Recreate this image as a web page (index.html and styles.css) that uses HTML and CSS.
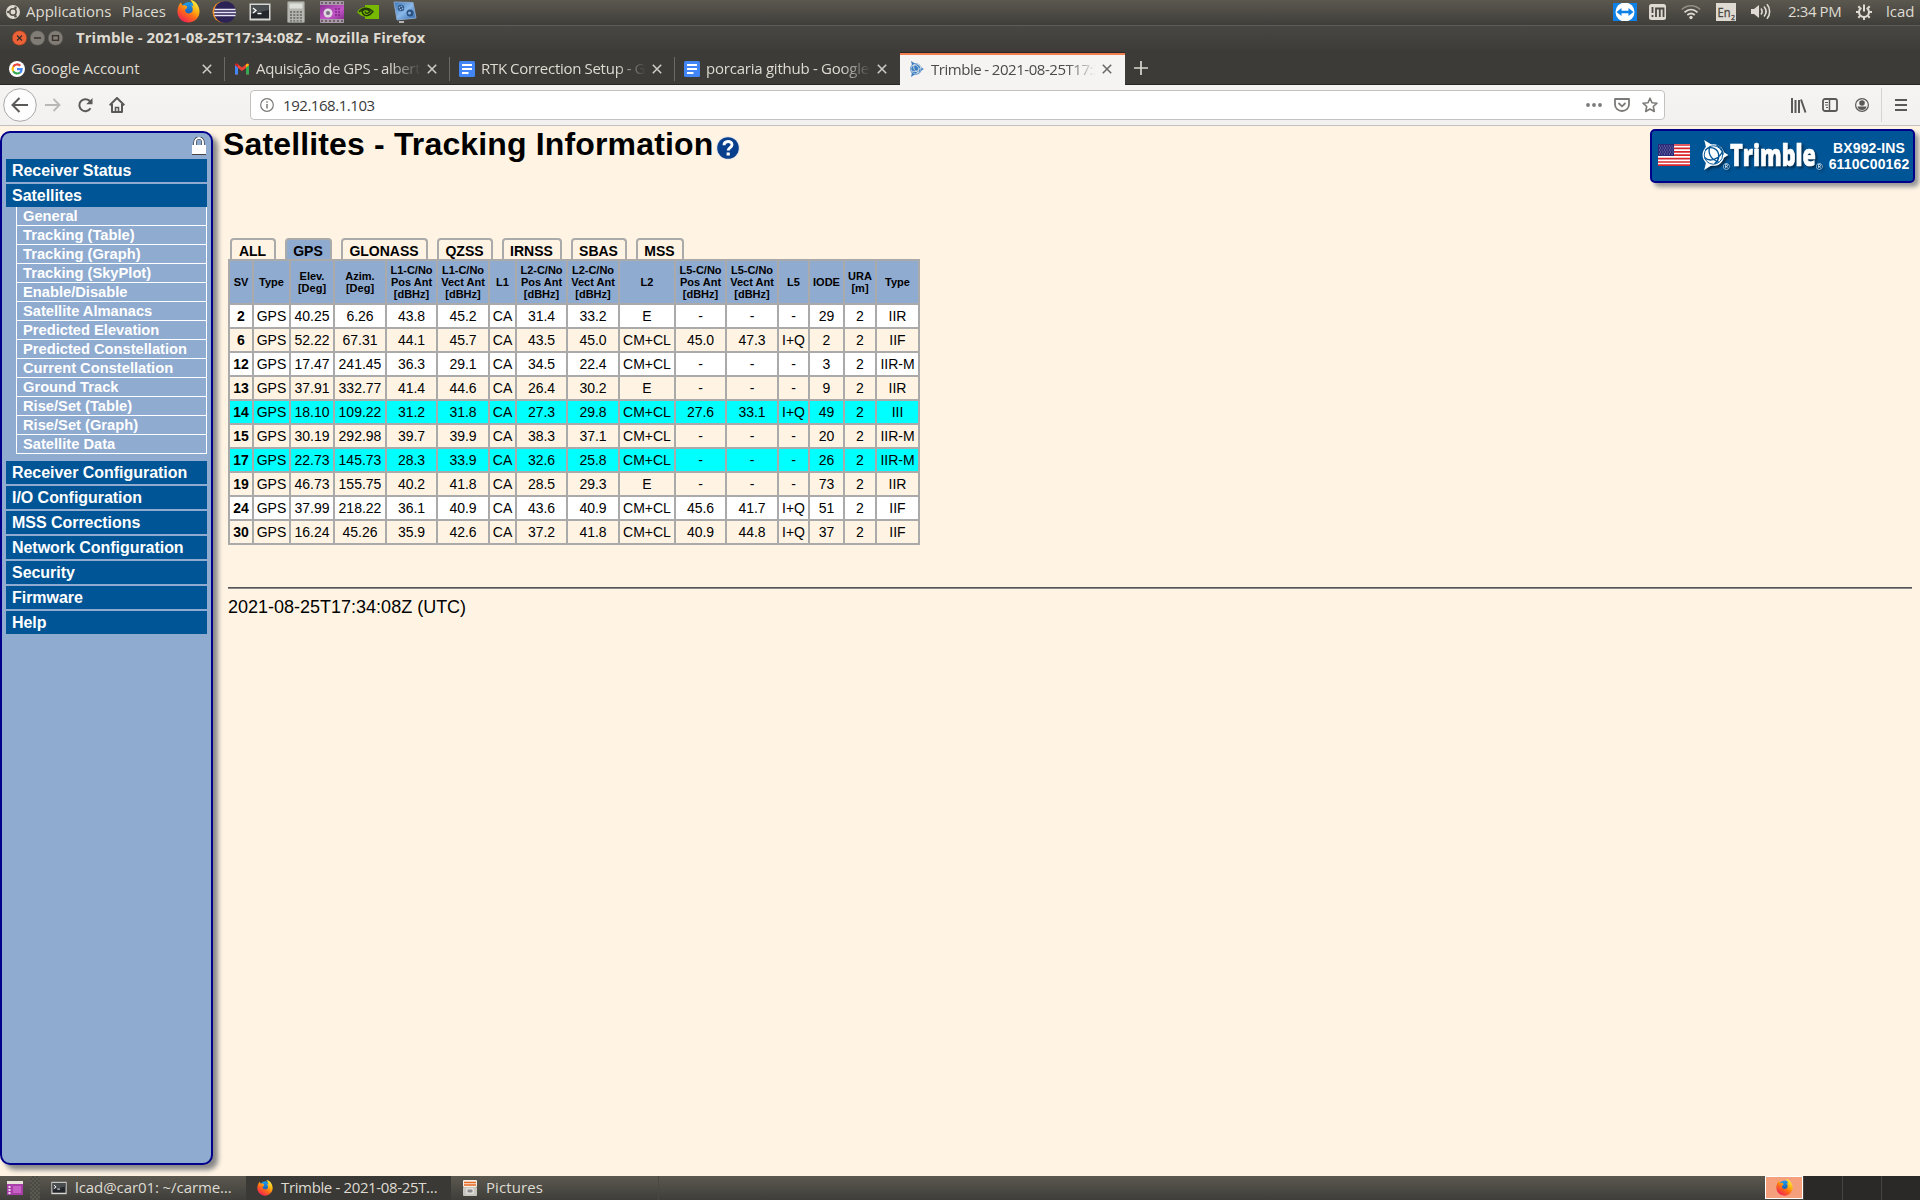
FILE: index.html
```html
<!DOCTYPE html>
<html lang="en">
<head>
<meta charset="utf-8">
<title>Trimble - 2021-08-25T17:34:08Z</title>
<link rel="stylesheet" href="styles.css">
</head>
<body>
<svg class="defs" width="0" height="0">
  <defs>
    <linearGradient id="fxBody" x1="0.85" y1="0" x2="0.2" y2="1"><stop offset="0" stop-color="#fff44f"/><stop offset=".35" stop-color="#ffb310"/><stop offset=".6" stop-color="#ff6a18"/><stop offset="1" stop-color="#f0185c"/></linearGradient>
    <linearGradient id="fxGlobe" x1="0" y1="0" x2="0" y2="1"><stop offset="0" stop-color="#1aa0f0"/><stop offset="1" stop-color="#1c3fa0"/></linearGradient>
    <linearGradient id="pink" x1="0" y1="0" x2="1" y2="1"><stop offset="0" stop-color="#8d2f96"/><stop offset=".6" stop-color="#c455c8"/><stop offset="1" stop-color="#8b2f92"/></linearGradient>
    <linearGradient id="scr" x1="0" y1="0" x2="1" y2="1"><stop offset="0" stop-color="#3f77b8"/><stop offset=".5" stop-color="#8ab9e8"/><stop offset="1" stop-color="#2c63ac"/></linearGradient>
    <symbol id="firefox" viewBox="0 0 24 24">
      <circle cx="12.5" cy="11" r="9" fill="url(#fxGlobe)"/>
      <path d="M2 5.500C2.500 4 3.500 3 4.500 2.500 4.500 4 5 5 6 5.700 8 5 10 5.500 10.500 7 11 8.500 9.500 9.200 8.500 10 8 12 10 14 12 14c3 0 4.500-1.500 4.500-4 0-2-1-3.500-2-4.500 1 .1 2 .6 2.600 1.200C17 4 15.500 2 14 0c5 .3 9.500 6 9.500 12S18.500 23.500 12 23.500 .500 18.500 .500 12.500C.500 9.500 1 7.500 2 5.500Z" fill="url(#fxBody)"/>
    </symbol>
    <symbol id="doc" viewBox="0 0 16 16"><rect width="16" height="16" rx="1.500" fill="#4285f4"/><path d="M3 4h10M3 8h10M3 12h6.500" stroke="#fff" stroke-width="2"/></symbol>
    <symbol id="term" viewBox="0 0 22 18"><rect x=".5" y=".5" width="21" height="17" fill="#d6d6d2"/><rect x="2" y="2" width="18" height="13.500" fill="#23262a"/><path d="M2 2h18v5L2 11Z" fill="#4a4d50"/><path d="M4 5l3 2.500-3 2.500M8.500 10.500h4" stroke="#fff" stroke-width="1.300" fill="none"/></symbol>
    <symbol id="globe" viewBox="0 0 26 29">
      <path d="M2 0 25.500 14.500 2 29C5 21 5 8 2 0Z" fill="currentColor"/>
      <circle cx="11" cy="14.500" r="10.500" fill="currentColor"/>
      <g fill="none" stroke="var(--cut)" stroke-width="1.300"><circle cx="11" cy="14.500" r="8.900" stroke-width=".9"/><path d="M3 10c5-5 12-2 13 4 .500 4-1 7-4 9M2.500 17c4 4 12 3 17-5M8 6c-3 6 0 13 8 15"/><path d="M14 5c4 2 6 5 6.500 9"/></g>
    </symbol>
    <symbol id="close" viewBox="0 0 10 10"><path d="M.8.800l8.400 8.400M9.200.800.800 9.200" stroke="currentColor" stroke-width="1.600"/></symbol>
  </defs>
</svg>

<header class="panel">
  <svg class="i-ubuntu" width="14" height="14" viewBox="0 0 14 14"><circle cx="7" cy="7" r="7" fill="#dfdbd2"/><circle cx="7" cy="7" r="3.200" fill="none" stroke="#55524a" stroke-width="1.500"/><g fill="#55524a"><circle cx="2.300" cy="7" r="1.300"/><circle cx="9.500" cy="2.800" r="1.300"/><circle cx="9.500" cy="11.200" r="1.300"/></g></svg>
  <span class="t apps">Applications</span>
  <span class="t places">Places</span>
  <svg class="i-fx" width="23" height="23"><use href="#firefox"/></svg>
  <svg class="i-ecl" width="24" height="22" viewBox="0 0 24 22"><circle cx="11" cy="11" r="10.500" fill="#f0912a"/><circle cx="13" cy="11" r="10.800" fill="#2c2255"/><path d="M2.500 8.500h21M2 11.500h22M2.500 14.500h21" stroke="#e8e6f4" stroke-width="1.600"/></svg>
  <svg class="i-term" width="22" height="18"><use href="#term"/></svg>
  <svg class="i-calc" width="18" height="22" viewBox="0 0 18 22"><rect x=".5" y=".5" width="17" height="21" rx="1" fill="#b5b5b0" stroke="#8b8b86"/><rect x="2.500" y="2.500" width="13" height="5" fill="#dcdfd8"/><path d="M3 11h12M3 14h12M3 17h12M3 19.800h12" stroke="#777" stroke-width="1.800" stroke-dasharray="2 1.300"/></svg>
  <svg class="i-shut" width="24" height="22" viewBox="0 0 24 22"><rect width="24" height="22" rx="1" fill="#a99aa8"/><path d="M1 2h22M1 20h22" stroke="#5c4b5a" stroke-width="1.500" stroke-dasharray="2 2"/><rect y="4" width="24" height="14" fill="url(#pink)"/><path d="M15 8h6M15 11h6M15 14h6" stroke="#7d2a84" stroke-width="1.300" stroke-dasharray="2 1"/><circle cx="8" cy="12" r="4.500" fill="#ded8df"/><circle cx="8" cy="12" r="2" fill="#7d6c82"/></svg>
  <svg class="i-nv" width="22" height="16" viewBox="0 0 22 16"><path d="M8 1h14v14H8Z" fill="#76b900"/><path d="M0 8C4 2 11 1 18 7 12 15 5 14 0 8Z" fill="#76b900"/><path d="M2 8c4-5 9-5 14-.500-4 5-9 6-11 0 2-3 5-3 8 0-2 2-4 3-5 0" fill="none" stroke="#22380a" stroke-width="1.400"/></svg>
  <svg class="i-cam" width="24" height="22" viewBox="0 0 24 22"><path d="M1 1 20 1.500 23 17 4 19Z" fill="url(#scr)" stroke="#86a5cc"/><circle cx="8" cy="7" r="3.300" fill="#2c5688"/><circle cx="8" cy="7" r="1.800" fill="none" stroke="#cde" stroke-dasharray="1.500 1"/><circle cx="17" cy="12" r="3.500" fill="#29507e"/><circle cx="16.500" cy="12" r="1.600" fill="#82aee0"/><path d="M6 21h5" stroke="#ddd" stroke-width="1.500"/></svg>
  <div class="tray">
    <svg width="24" height="18" viewBox="0 0 24 18"><rect width="24" height="18" fill="#0f80e6"/><circle cx="12" cy="9" r="9.500" fill="#fff"/><path d="M3.500 9 8.500 5v2.800h7V5l5 4-5 4v-2.800h-7V13Z" fill="#0f80e6"/></svg>
    <svg class="m-12" width="17" height="16" viewBox="0 0 17 16"><rect width="17" height="16" rx="2.500" fill="#dfdbd2"/><path d="M3.500 3v6M3.500 11v2M7 13V4.500h7.500V13M10.800 4.500V13" stroke="#4a4842" stroke-width="1.800" fill="none"/></svg>
    <svg class="m-15" width="20" height="16" viewBox="0 0 20 16"><g fill="none" stroke="#dfdbd2" stroke-width="1.700"><path d="M.8 5.500C6 .500 14 .500 19.200 5.500" opacity=".45"/><path d="M3.500 8.300c4-3.700 9-3.700 13 0M6.300 11c2.500-2 5-2 7.500 0"/></g><circle cx="10" cy="13.500" r="1.700" fill="#dfdbd2"/></svg>
    <svg class="m-15" width="20" height="18" viewBox="0 0 20 18"><rect width="20" height="18" fill="#dfdbd2"/><text x="1.500" y="14" font-family="Open Sans" font-size="12.500" textLength="13" lengthAdjust="spacingAndGlyphs" fill="#4a4842" stroke="#4a4842" stroke-width=".3">En</text><text x="15" y="17" font-family="Open Sans" font-size="7" fill="#4a4842" stroke="#4a4842" stroke-width=".3">2</text></svg>
    <svg class="m-15" width="20" height="17" viewBox="0 0 20 17"><path d="M0 6h3l5-4v13l-5-4H0Z" fill="#dfdbd2"/><g fill="none" stroke="#dfdbd2" stroke-width="1.600"><path d="M10 5.500c1.500 2 1.500 4 0 6M13 3.500c2.500 3 2.500 7 0 10M16 1.200c3.500 4 3.500 10.500 0 14.600"/></g></svg>
    <span class="t clock">2:34 PM</span>
    <svg class="m-15" width="16" height="16" viewBox="0 0 16 16"><g fill="none" stroke="#dfdbd2"><path d="M5.300 3.800a5 5 0 1 0 5.400 0M8 .500v7" stroke-width="2"/><path d="M0 8h3M13 8h3M8 13v3M2.300 2.300l1.700 1.700M13.700 2.300l-1.700 1.700M2.300 13.700l1.700-1.700M13.700 13.700l-1.700-1.700" stroke-width="2"/></g></svg>
    <span class="t user">lcad</span>
  </div>
</header>

<div class="titlebar">
  <svg width="52" height="16" viewBox="0 0 52 16"><circle cx="7.500" cy="8" r="7.300" fill="#ee6238" stroke="#8c3a1d" stroke-width=".6"/><circle cx="25.500" cy="8" r="7.300" fill="#807d76" stroke="#5a5852" stroke-width=".6"/><circle cx="43.500" cy="8" r="7.300" fill="#807d76" stroke="#5a5852" stroke-width=".6"/><g fill="none" stroke="#3a2f29" stroke-width="1.300"><path d="M5 5.500l5 5M10 5.500l-5 5M22 8h7"/><rect x="40.500" y="5.700" width="6" height="4.600"/></g></svg>
  <span class="t title">Trimble - 2021-08-25T17:34:08Z - Mozilla Firefox</span>
</div>

<nav class="tabs">
  <div class="tab"><svg width="16" height="16" viewBox="0 0 16 16"><circle cx="8" cy="8" r="8" fill="#fff"/><g fill="none" stroke-width="2.200"><path d="M4.200 5.700A4.600 4.600 0 0 1 11.300 4.700" stroke="#ea4335"/><path d="M4.200 10.300a4.600 4.600 0 0 1 0-4.600" stroke="#fbbc05"/><path d="M11 11.500a4.600 4.600 0 0 1-6.800-1.200" stroke="#34a853"/><path d="M8 8.200h4.600c0 1.500-.6 2.600-1.600 3.300" stroke="#4285f4"/></g></svg><span class="t label g1">Google Account</span><svg class="x" width="10" height="10"><use href="#close"/></svg></div>
  <div class="tab"><svg width="16" height="16" viewBox="0 0 16 16"><path d="M1 3v10.500h3V7l4 3 4-3v6.500h3V3l-2-.5-5 4-5-4Z" fill="#ea4335"/><path d="M1 4v9.500h3V6.500Z" fill="#4285f4"/><path d="M15 4v9.500h-3V6.500Z" fill="#34a853"/><path d="M15 4l-3 2.500V3.500l2-1Z" fill="#fbbc05"/><path d="M1 4l3 2.500V3.500L2 2.500Z" fill="#c5221f"/></svg><span class="t label fade g2">Aquisição de GPS - alberto</span><svg class="x" width="10" height="10"><use href="#close"/></svg></div>
  <div class="tab"><svg width="16" height="16"><use href="#doc"/></svg><span class="t label fade g3">RTK Correction Setup - Go</span><svg class="x" width="10" height="10"><use href="#close"/></svg></div>
  <div class="tab last"><svg width="16" height="16"><use href="#doc"/></svg><span class="t label fade g4">porcaria github - Google</span><svg class="x" width="10" height="10"><use href="#close"/></svg></div>
  <div class="tab active"><svg class="mark" width="16" height="16"><use href="#globe"/></svg><span class="t label fade g5">Trimble - 2021-08-25T17:34</span><svg class="x" width="10" height="10"><use href="#close"/></svg></div>
  <svg class="plus" width="14" height="14" viewBox="0 0 14 14"><path d="M7 0v14M0 7h14" stroke="#dad7d0" stroke-width="1.700"/></svg>
</nav>

<div class="toolbar">
  <svg class="back" width="34" height="34" viewBox="0 0 34 34"><circle cx="17" cy="17" r="16.300" fill="#fdfdfd" stroke="#a9a8a6"/><path d="M25 17H10M16.500 10l-7 7 7 7" fill="none" stroke="#5a5957" stroke-width="2"/></svg>
  <svg class="fwd" width="16" height="14" viewBox="0 0 16 14"><path d="M0 7h14.500M8.500 1l6 6-6 6" fill="none" stroke="#b9b8b6" stroke-width="1.800"/></svg>
  <svg class="reload" width="16" height="16" viewBox="0 0 16 16"><path d="M13.500 11.200A6 6 0 1 1 12.500 3.800L14 5.500" fill="none" stroke="#5a5957" stroke-width="2"/><path d="M15.500 1v6.300H9.200Z" fill="#5a5957"/></svg>
  <svg class="home" width="16" height="16" viewBox="0 0 16 16"><path d="M.7 8.200 8 1l7.300 7.200M3 7v8h10V7" fill="none" stroke="#5a5957" stroke-width="2" stroke-linejoin="round"/><path d="M6.500 15v-4.500h3V15" fill="none" stroke="#5a5957" stroke-width="1.600"/></svg>
  <div class="urlbar">
    <svg width="14" height="14" viewBox="0 0 14 14"><circle cx="7" cy="7" r="6.300" fill="none" stroke="#7b7a78" stroke-width="1.200"/><path d="M7 6v4.500M7 3.200v1.600" stroke="#7b7a78" stroke-width="1.500"/></svg>
    <span class="t addr">192.168.1.103</span>
    <svg class="dots" width="16" height="4" viewBox="0 0 16 4"><g fill="#7b7a78"><circle cx="2" cy="2" r="1.900"/><circle cx="8" cy="2" r="1.900"/><circle cx="14" cy="2" r="1.900"/></g></svg>
    <svg class="m-12" width="16" height="14" viewBox="0 0 16 14"><path d="M1 1h14v5.500a7 6.500 0 0 1-14 0Z" fill="none" stroke="#7b7a78" stroke-width="1.800" stroke-linejoin="round"/><path d="M4.500 5 8 8.300 11.500 5" fill="none" stroke="#7b7a78" stroke-width="1.800"/></svg>
    <svg class="m-12" width="16" height="16" viewBox="0 0 16 16"><path d="M8 1.200l2 4.500 5 .5-3.700 3.300 1 5L8 12l-4.300 2.500 1-5L1 6.200l5-.5Z" fill="none" stroke="#7b7a78" stroke-width="1.600" stroke-linejoin="round"/></svg>
  </div>
  <svg class="lib" width="16" height="15" viewBox="0 0 16 15"><path d="M1 0v15M4.500 2v13M8 2v13M10 1.500l4.500 13" stroke="#5a5957" stroke-width="2"/></svg>
  <svg class="m-15" width="16" height="14" viewBox="0 0 16 14"><rect x="1" y="1" width="14" height="12" rx="2" fill="none" stroke="#5a5957" stroke-width="1.800"/><path d="M7.500 1v12" stroke="#5a5957" stroke-width="1.500"/><path d="M3 4.500h3M3 7h3M4 9.500h2" stroke="#5a5957"/></svg>
  <svg class="m-17" width="14" height="14" viewBox="0 0 14 14"><circle cx="7" cy="7" r="6.400" fill="none" stroke="#5a5957" stroke-width="1.200"/><circle cx="7" cy="5" r="2.800" fill="#5a5957"/><path d="M2.500 8.500h9c-.5 2.500-2 3.500-4.500 3.500S3 11 2.500 8.500Z" fill="#5a5957"/></svg>
  <span class="tsep"></span>
  <svg class="menu" width="12" height="12" viewBox="0 0 12 12"><path d="M0 1h12M0 6h12M0 11h12" stroke="#5a5957" stroke-width="2"/></svg>
</div>

<div class="page">
  <aside class="side">
    <svg class="lock" width="14" height="18" viewBox="0 0 14 18"><path d="M3 9V5.500a4 4.500 0 0 1 8 0V9" fill="none" stroke="#333" stroke-width="3.200"/><path d="M3 9V5.500a4 4.500 0 0 1 8 0V9" fill="none" stroke="#fff" stroke-width="2"/><rect y="8" width="14" height="9" fill="#fff"/><path d="M0 17.500h14" stroke="#444"/></svg>
    <a class="main">Receiver Status</a>
    <a class="main open">Satellites</a>
    <div class="sub">
      <a>General</a><a>Tracking (Table)</a><a>Tracking (Graph)</a><a>Tracking (SkyPlot)</a><a>Enable/Disable</a><a>Satellite Almanacs</a><a>Predicted Elevation</a><a>Predicted Constellation</a><a>Current Constellation</a><a>Ground Track</a><a>Rise/Set (Table)</a><a>Rise/Set (Graph)</a><a>Satellite Data</a>
    </div>
    <a class="main">Receiver Configuration</a>
    <a class="main">I/O Configuration</a>
    <a class="main">MSS Corrections</a>
    <a class="main">Network Configuration</a>
    <a class="main">Security</a>
    <a class="main">Firmware</a>
    <a class="main">Help</a>
  </aside>

  <main class="content">
    <div class="head">
      <h1>Satellites - Tracking Information</h1>
      <svg class="help" width="24" height="26" viewBox="0 0 24 26"><circle cx="12" cy="13" r="11.800" fill="#e6e4e8"/><circle cx="12" cy="13" r="10.800" fill="#083f8c"/><path d="M8 10.300c0-5 8-5 8-.5 0 2.700-3.800 2.900-3.800 5.700" fill="none" stroke="#fff" stroke-width="2.900"/><rect x="10.600" y="17.500" width="3.200" height="3" fill="#fff"/></svg>
      <div class="brand">
        <svg class="flag" width="32" height="22" viewBox="0 0 32 22"><rect width="32" height="22" fill="#fff"/><path d="M0 1h32M0 4.400h32M0 7.800h32M0 11.200h32M0 14.600h32M0 18h32M0 21.200h32" stroke="#d8252c" stroke-width="1.700"/><rect width="16" height="12" fill="#2a2a78"/><path d="M1 2h15M2 4h14M1 6h15M2 8h14M1 10h15" stroke="#8c8cba" stroke-dasharray="1 1.500"/></svg>
        <svg class="logo" width="122" height="34" viewBox="0 0 122 34">
          <svg class="white" width="27" height="30" x="-1" y="1"><use href="#globe"/></svg>
          <text x="27" y="27" class="word" textLength="86" lengthAdjust="spacingAndGlyphs">Trimble</text>
          <text x="20" y="31" class="reg">®</text><text x="113" y="31" class="reg">®</text>
        </svg>
        <div class="model">BX992-INS<br>6110C00162</div>
      </div>
    </div>

    <div class="systabs"><a style="width:46px">ALL</a><a class="on" style="width:47px">GPS</a><a style="width:87px">GLONASS</a><a style="width:56px">QZSS</a><a style="width:60px">IRNSS</a><a style="width:56px">SBAS</a><a style="width:48px">MSS</a></div>
    <table>
      <colgroup><col style="width:24px"><col style="width:37px"><col style="width:44px"><col style="width:52px"><col style="width:51px"><col style="width:52px"><col style="width:27px"><col style="width:51px"><col style="width:52px"><col style="width:56px"><col style="width:51px"><col style="width:52px"><col style="width:31px"><col style="width:35px"><col style="width:32px"><col style="width:43px"></colgroup>
      <thead><tr><th>SV</th><th>Type</th><th>Elev.<br>[Deg]</th><th>Azim.<br>[Deg]</th><th>L1-C/No<br>Pos Ant<br>[dBHz]</th><th>L1-C/No<br>Vect Ant<br>[dBHz]</th><th>L1</th><th>L2-C/No<br>Pos Ant<br>[dBHz]</th><th>L2-C/No<br>Vect Ant<br>[dBHz]</th><th>L2</th><th>L5-C/No<br>Pos Ant<br>[dBHz]</th><th>L5-C/No<br>Vect Ant<br>[dBHz]</th><th>L5</th><th>IODE</th><th>URA<br>[m]</th><th>Type</th></tr></thead>
      <tbody>
        <tr class="w"><th>2</th><td>GPS</td><td>40.25</td><td>6.26</td><td>43.8</td><td>45.2</td><td>CA</td><td>31.4</td><td>33.2</td><td>E</td><td>-</td><td>-</td><td>-</td><td>29</td><td>2</td><td>IIR</td></tr>
        <tr><th>6</th><td>GPS</td><td>52.22</td><td>67.31</td><td>44.1</td><td>45.7</td><td>CA</td><td>43.5</td><td>45.0</td><td>CM+CL</td><td>45.0</td><td>47.3</td><td>I+Q</td><td>2</td><td>2</td><td>IIF</td></tr>
        <tr class="w"><th>12</th><td>GPS</td><td>17.47</td><td>241.45</td><td>36.3</td><td>29.1</td><td>CA</td><td>34.5</td><td>22.4</td><td>CM+CL</td><td>-</td><td>-</td><td>-</td><td>3</td><td>2</td><td>IIR-M</td></tr>
        <tr><th>13</th><td>GPS</td><td>37.91</td><td>332.77</td><td>41.4</td><td>44.6</td><td>CA</td><td>26.4</td><td>30.2</td><td>E</td><td>-</td><td>-</td><td>-</td><td>9</td><td>2</td><td>IIR</td></tr>
        <tr class="c"><th>14</th><td>GPS</td><td>18.10</td><td>109.22</td><td>31.2</td><td>31.8</td><td>CA</td><td>27.3</td><td>29.8</td><td>CM+CL</td><td>27.6</td><td>33.1</td><td>I+Q</td><td>49</td><td>2</td><td>III</td></tr>
        <tr><th>15</th><td>GPS</td><td>30.19</td><td>292.98</td><td>39.7</td><td>39.9</td><td>CA</td><td>38.3</td><td>37.1</td><td>CM+CL</td><td>-</td><td>-</td><td>-</td><td>20</td><td>2</td><td>IIR-M</td></tr>
        <tr class="c"><th>17</th><td>GPS</td><td>22.73</td><td>145.73</td><td>28.3</td><td>33.9</td><td>CA</td><td>32.6</td><td>25.8</td><td>CM+CL</td><td>-</td><td>-</td><td>-</td><td>26</td><td>2</td><td>IIR-M</td></tr>
        <tr><th>19</th><td>GPS</td><td>46.73</td><td>155.75</td><td>40.2</td><td>41.8</td><td>CA</td><td>28.5</td><td>29.3</td><td>E</td><td>-</td><td>-</td><td>-</td><td>73</td><td>2</td><td>IIR</td></tr>
        <tr class="w"><th>24</th><td>GPS</td><td>37.99</td><td>218.22</td><td>36.1</td><td>40.9</td><td>CA</td><td>43.6</td><td>40.9</td><td>CM+CL</td><td>45.6</td><td>41.7</td><td>I+Q</td><td>51</td><td>2</td><td>IIF</td></tr>
        <tr><th>30</th><td>GPS</td><td>16.24</td><td>45.26</td><td>35.9</td><td>42.6</td><td>CA</td><td>37.2</td><td>41.8</td><td>CM+CL</td><td>40.9</td><td>44.8</td><td>I+Q</td><td>37</td><td>2</td><td>IIF</td></tr>
      </tbody>
    </table>
    <div class="rule"></div>
    <p class="utc">2021-08-25T17:34:08Z (UTC)</p>
  </main>
</div>

<footer class="taskbar">
  <svg class="desk" width="16" height="14" viewBox="0 0 16 14"><rect width="16" height="14" fill="#a93fa9"/><rect width="16" height="3" fill="#e8e4da"/><path d="M2.500 5v8" stroke="#f0d8f0" stroke-width="2" stroke-dasharray="2 1"/><rect x="6" y="5" width="8" height="7" fill="#c561c5"/></svg>
  <span class="grip"></span>
  <div class="task k1"><svg width="16" height="14"><use href="#term"/></svg><span class="t b1">lcad@car01: ~/carme…</span></div>
  <div class="task k2"><svg width="16" height="16"><use href="#firefox"/></svg><span class="t b2">Trimble - 2021-08-25T…</span></div>
  <div class="task k3"><svg width="14" height="16" viewBox="0 0 14 16"><rect width="14" height="7" rx="1" fill="#f4efe6"/><path d="M1 2.500h12M1 5h12" stroke="#e8651c" stroke-width="1.600"/><rect y="7" width="14" height="9" rx="1" fill="#c9c6c0"/><rect x="4" y="9" width="6" height="4" fill="#888" stroke="#fff" stroke-width=".8"/></svg><span class="t b3">Pictures</span></div>
  <div class="spaces"><span class="ws cur"><svg width="17" height="17"><use href="#firefox"/></svg></span><span class="ws"></span><span class="ws"></span><span class="ws"></span></div>
</footer>
</body>
</html>
```
FILE: styles.css
```css
* { box-sizing: border-box; }
body {
  margin: 0;
  width: 1920px;
  height: 1200px;
  overflow: hidden;
  display: flex;
  flex-direction: column;
  background: #fff4e4;
  font-family: "Liberation Sans", Arial, sans-serif;
  color: #000;
}
.defs { display: block; height: 0; flex: none; }
svg { display: block; flex: none; }
.t {
  display: block;
  flex: none;
  white-space: nowrap;
  font-family: "Open Sans", "Noto Sans", sans-serif;
  font-size: 15px;
  line-height: 20px;
  font-stretch: 90%;
  color: #dfdbd2;
}

/* desktop panel */
.panel {
  flex: 0 0 26px;
  display: flex;
  align-items: center;
  padding: 0 7px 2px 6px;
  background: linear-gradient(#5b584f, #3f3e3a);
  border-bottom: 1px solid #5d5c57;
}
.panel .t { margin-top: -1px; }
.apps { width: 96px; margin-left: 6px; }
.places { width: 55px; }
.i-ecl { margin-left: 12px; }
.i-term { margin-left: 13px; }
.i-calc { margin-left: 16px; }
.i-shut { margin-left: 15px; }
.i-nv { margin-left: 13px; }
.i-cam { margin-left: 14px; }
.tray { display: flex; align-items: center; margin-left: auto; }
.m-12 { margin-left: 12px; }
.m-15 { margin-left: 15px; }
.m-17 { margin-left: 17px; }
.clock { width: 53px; margin-left: 17px; letter-spacing: -.4px; }
.user { width: 27px; margin-left: 14px; }

.titlebar {
  flex: 0 0 26px;
  display: flex;
  align-items: flex-start;
  padding: 4px 0 0 12px;
  background: linear-gradient(#484742, #3c3b37);
}
.title { margin: -3px 0 0 12px; font-weight: 700; letter-spacing: .02px; }

/* browser tabs */
.tabs {
  flex: 0 0 33px;
  display: flex;
  align-items: stretch;
  background: #3c3b37;
  border-bottom: 1px solid #2b2624;
}
.tab {
  position: relative;
  flex: 0 0 225px;
  display: flex;
  align-items: center;
  padding: 1px 13px 0 9px;
}
.tab .t { margin-top: -1px; }
.tab:not(.last):not(.active)::after {
  content: "";
  position: absolute;
  right: 0;
  top: 5px;
  width: 1px;
  height: 24px;
  background: #6b6964;
}
.label { width: 165px; margin-left: 6px; overflow: hidden; }
.fade { -webkit-mask-image: linear-gradient(90deg, #000 82%, transparent 100%); mask-image: linear-gradient(90deg, #000 82%, transparent 100%); }
.g1 { letter-spacing: -.1px; }
.g2 { letter-spacing: -.35px; word-spacing: -.4px; }
.g3 { letter-spacing: -.25px; word-spacing: -.5px; }
.g4 { letter-spacing: -.2px; word-spacing: -.3px; }
.g5 { letter-spacing: -.45px; word-spacing: -.4px; }
.x { margin-left: auto; color: #cdcac3; }
.active {
  margin-bottom: -1px;
  background: #f5f4f2;
  border-top: 1px solid #2b2624;
  box-shadow: inset 0 2px #f0804f;
  padding-top: 0;
}
.active .t { color: #4a4a48; }
.active .x { color: #6c6b69; }
.mark { color: #3d7ec0; --cut: #f5f4f2; }
.plus { margin: 9px 0 0 9px; }

/* navigation toolbar */
.toolbar {
  flex: 0 0 41px;
  display: flex;
  align-items: center;
  padding: 0 13px 0 3px;
  background: linear-gradient(#f5f4f2, #f2f1ef);
  border-bottom: 1px solid #c3c1bf;
}
.fwd { margin-left: 8px; }
.reload { margin-left: 16px; }
.home { margin-left: 16px; }
.urlbar {
  flex: 0 0 1415px;
  height: 30px;
  display: flex;
  align-items: center;
  margin-left: 125px;
  padding: 0 6px 0 9px;
  background: #fff;
  border: 1px solid #c4c2c0;
  border-radius: 4px;
}
.addr { margin-left: 9px; color: #3a3a3a; letter-spacing: -.45px; }
.dots { margin-left: auto; }
.lib { margin-left: 126px; }
.tsep { width: 1px; height: 34px; margin-left: 12px; background: #d6d4d2; }
.menu { margin-left: auto; }

/* receiver page */
.page { flex: 1; display: flex; align-items: flex-start; }
.side {
  flex: 0 0 213px;
  height: 1034px;
  margin-top: 5px;
  padding: 4px 4px 0;
  background: #8fabd0;
  border: 2px solid #00008b;
  border-radius: 10px;
  box-shadow: 5px 5px 5px #888;
}
.lock { margin: 0 1px 4px auto; }
.side a { display: block; color: #fff; font-weight: 700; white-space: nowrap; }
.main {
  height: 23px;
  margin-bottom: 2px;
  padding-left: 6px;
  background: #005596;
  font-size: 16px;
  line-height: 23px;
  letter-spacing: -.04px;
}
.side .open { margin-bottom: 0; }
.sub { margin: 0 0 7px 10px; border: solid #fff; border-width: 0 1px; }
.sub a {
  height: 19px;
  padding-left: 6px;
  border-bottom: 1px solid #fff;
  font-size: 14.7px;
  line-height: 18px;
}

.content { flex: 1; padding: 3px 5px 0 15px; }
.head { display: flex; align-items: flex-start; height: 109px; margin-left: -5px; }
h1 { margin: -3px 0 0; font-size: 32px; line-height: 37px; letter-spacing: .15px; white-space: nowrap; }
.help { margin: 6px 0 0 3px; }
.brand {
  width: 265px;
  height: 54px;
  margin-left: auto;
  display: flex;
  align-items: center;
  background: #005596;
  border: 2px solid #00008b;
  border-radius: 5px;
  box-shadow: 4px 4px 4px #999;
  color: #fff;
}
.flag { margin-left: 6px; margin-bottom: 2px; }
.logo { margin-left: 13px; margin-bottom: 1px; overflow: visible; filter: drop-shadow(2px 2px 1px rgba(0, 0, 0, .45)); }
.white { color: #fff; --cut: #005596; }
.word { font: 800 30px "Open Sans", sans-serif; fill: #fff; stroke: #fff; stroke-width: .7px; }
.reg { font: 9px "Liberation Sans", sans-serif; fill: #fff; }
.model { flex: 1; font-size: 14px; font-weight: 700; line-height: 16px; letter-spacing: .12px; text-align: center; }

.systabs { display: flex; gap: 9px; padding-left: 2px; height: 21px; }
.systabs a {
  height: 21px;
  padding-right: 1px;
  border: 2px solid #aaa;
  border-bottom: 0;
  border-radius: 4px 4px 0 0;
  font-size: 14px;
  font-weight: 700;
  line-height: 22px;
  text-align: center;
}
.systabs .on { background: #8fabd0; }

table { width: 692px; table-layout: fixed; border-collapse: collapse; }
th, td { padding: 0; border: 2px solid #aaa; height: 24px; font-size: 14px; line-height: 16px; text-align: center; white-space: nowrap; }
thead th { height: 44px; background: #8fabd0; font-size: 11px; line-height: 12px; }
.w { background: #fff; }
.c { background: #0ff; }
.rule { height: 2px; margin: 42px 3px 0 0; background: #555; border-bottom: 1px solid #888; }
.utc { margin: 8px 0 0; font-size: 18px; line-height: 20px; }

/* bottom panel */
.taskbar {
  flex: 0 0 24px;
  display: flex;
  align-items: center;
  background: linear-gradient(#5b584f, #3f3e3a);
}
.taskbar .t { margin-top: -2px; }
.desk { margin-left: 7px; }
.grip { width: 10px; height: 24px; margin: 0 0 0 7px; background: repeating-conic-gradient(#4b4943 0 25%, #5a5850 0 50%) 0 0 / 4px 4px; }
.task { height: 24px; display: flex; align-items: center; gap: 8px; }
.k1 { width: 206px; padding-left: 11px; }
.k2 { width: 205px; padding-left: 11px; background: #3a3935; }
.k3 { width: 208px; padding-left: 12px; gap: 9px; border-right: 1px solid #4a4842; }
.b1 { letter-spacing: -.08px; }
.b2 { letter-spacing: -.36px; }
.b3 { letter-spacing: .1px; }
.spaces { display: flex; gap: 1px; margin-left: auto; height: 24px; background: #454440; }
.ws { width: 38px; height: 24px; background: #2a2927; }
.cur { height: 23px; display: flex; align-items: center; justify-content: center; background: #f59f7c; border: 1px solid #fff; }
```
